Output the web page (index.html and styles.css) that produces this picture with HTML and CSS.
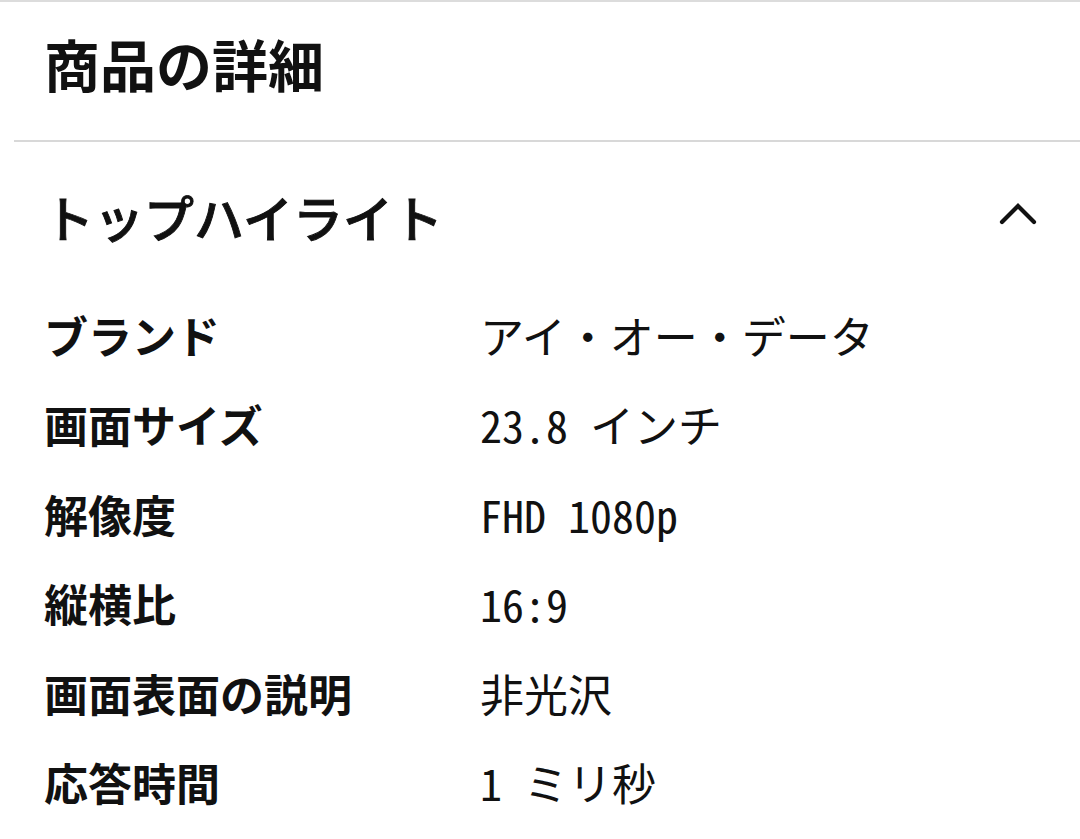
FILE: index.html
```html
<!DOCTYPE html>
<html lang="ja">
<head>
<meta charset="utf-8">
<link rel="stylesheet" href="styles.css">
</head>
<body>
<div class="topline"></div>
<div class="header">
  <h1 class="title">商品の詳細</h1>
</div>
<section class="section">
  <div class="section-head">
    <h2 class="section-title">トップハイライト</h2>
    <svg class="chevron" width="40" height="24" viewBox="0 0 40 24" aria-hidden="true">
      <polyline points="3,21 19,5 35,21" fill="none" stroke="#111" stroke-width="4.2" stroke-linecap="round" stroke-linejoin="miter"/>
    </svg>
  </div>
  <div class="rows">
    <div class="row"><div class="label">ブランド</div><div class="value">アイ・オー・データ</div></div>
    <div class="row"><div class="label">画面サイズ</div><div class="value">23.8 インチ</div></div>
    <div class="row"><div class="label">解像度</div><div class="value">FHD 1080p</div></div>
    <div class="row"><div class="label">縦横比</div><div class="value">16:9</div></div>
    <div class="row"><div class="label">画面表面の説明</div><div class="value">非光沢</div></div>
    <div class="row"><div class="label">応答時間</div><div class="value">1 ミリ秒</div></div>
  </div>
</section>
</body>
</html>
```

FILE: styles.css
```css
html, body {
  margin: 0;
  padding: 0;
  background: #ffffff;
}
body {
  font-family: "Noto Sans CJK JP", "Noto Sans", sans-serif;
  color: #111111;
  width: 1080px;
  height: 839px;
  overflow: hidden;
}
.topline {
  height: 2px;
  background: #dcdcdc;
}
.header {
  height: 138px;
  margin-left: 14px;
  padding-left: 30px;
  display: flex;
  align-items: center;
  border-bottom: 2px solid #d8d8d8;
}
.title {
  margin: 0;
  font-size: 56px;
  font-weight: 700;
  line-height: 1;
  position: relative;
  top: -8px;
}
.section {
  padding-left: 44px;
}
.section-head {
  height: 148px;
  display: flex;
  align-items: center;
  justify-content: space-between;
  padding-right: 41px;
}
.section-title {
  margin: 0;
  font-size: 50px;
  font-weight: 500;
  line-height: 1;
  -webkit-text-stroke: 0.9px #111111;
}
.chevron {
  display: block;
  margin-top: -6px;
}
.rows {
  display: flex;
  flex-direction: column;
}
.row {
  height: 89.5px;
  display: flex;
  align-items: center;
}
.label {
  width: 436px;
  font-size: 44px;
  font-weight: 700;
  line-height: 1;
}
.value {
  font-size: 44px;
  font-weight: 400;
  line-height: 1;
  font-feature-settings: "hwid";
}
```
